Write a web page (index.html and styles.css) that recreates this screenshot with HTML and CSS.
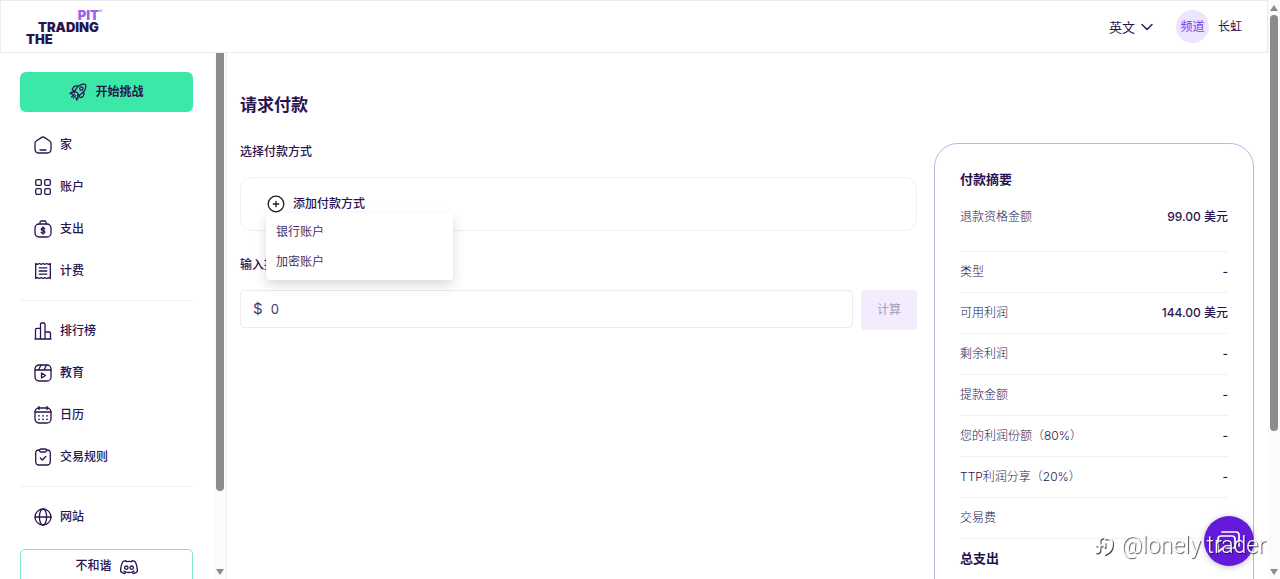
FILE: index.html
```html
<!DOCTYPE html>
<html lang="zh-CN">
<head>
<meta charset="utf-8">
<title>请求付款</title>
<link rel="stylesheet" href="styles.css">
</head>
<body>
<div class="app">
  <div class="view">
    <header class="header">
      <a class="logo" href="#" aria-label="The Trading Pit">
        <span class="logo-pit">PIT<i>®</i></span>
        <span class="logo-trading">TRADING</span>
        <span class="logo-the">THE</span>
      </a>
      <div class="header-tools">
        <button class="lang" type="button">英文
          <svg width="12" height="8" viewBox="0 0 12 8"><path d="M1 1.5l5 5 5-5"/></svg>
        </button>
        <a class="user" href="#"><span class="avatar">频道</span><span>长虹</span></a>
      </div>
    </header>
    <div class="body">
      <aside class="sidebar">
        <div class="sidebar-content">
          <button class="start" type="button">
            <svg class="icon" viewBox="0 0 18 18"><path d="M5.600 7.800L9.300 3.200Q12 .9 15.200 1.100 17 1.200 16.900 3 17 6 14.800 8.700L10.200 12.400M5.600 7.800q2.800 1.500 4.600 4.600M9.300 3.200Q6.500 2.200 4.600 4L3.300 6.200q-.2 1.200 2.300 1.600M14.800 8.700q1 2.800-.8 4.700l-2.200 1.300q-1.200.2-1.600-2.300M5.800 9.500Q3 8.200 1 10.400l2.300.6M8.500 12.200q1.300 2.800-.9 4.800L7 14.700M5.300 11.200l-2.600 2.600M6.500 12.600l-2.200 2.200"/><circle cx="12.400" cy="5.600" r="1.700"/></svg>
            开始挑战
          </button>
          <nav class="nav">
            <a href="#"><svg class="icon" viewBox="0 0 18 18"><path d="M1 7.300Q1 5.800 2.300 5L7.700 1.400Q9 .6 10.300 1.400L15.700 5Q17 5.800 17 7.300V13Q17 17 13 17H5Q1 17 1 13zM6 14h6"/></svg>家</a>
            <a href="#"><svg class="icon" viewBox="0 0 18 18"><rect x="1.700" y="1.700" width="5.600" height="5.600" rx="1.300"/><rect x="10.700" y="1.700" width="5.600" height="5.600" rx="1.300"/><rect x="1.700" y="10.700" width="5.600" height="5.600" rx="1.300"/><rect x="10.700" y="10.700" width="5.600" height="5.600" rx="1.300"/></svg>账户</a>
            <a href="#"><svg class="icon" viewBox="0 0 18 18"><rect x="1" y="4" width="16" height="13" rx="4"/><path d="M6 4V2.500Q6 1 7.500 1h3Q12 1 12 2.500V4M10.800 9Q10.500 8 9 8 7.200 8 7.200 9.300 7.200 10.300 9 10.500 10.900 10.700 10.900 11.900 10.900 13.200 9 13.200 7.300 13.200 7.100 12.100M9 7v7.200"/></svg>支出</a>
            <a href="#"><svg class="icon" viewBox="0 0 18 18"><path d="M1.700 1.500l1.800.8 1.800-.8 1.900.8L9 1.500l1.800.8 1.900-.8 1.800.8 1.800-.8v15l-1.800-.8-1.800.8-1.900-.8-1.800.8-1.800-.8-1.900.8-1.800-.8-1.800.8zM5.200 5.800h7.600M5.200 9h7.600M5.200 12.200h7.600"/></svg>计费</a>
          </nav>
          <nav class="nav">
            <a href="#"><svg class="icon" viewBox="0 0 18 18"><path d="M1 17h16M1.500 17V7.500q0-1.200 1.200-1.200h3.800M6.500 17V2.200Q6.500 1 7.700 1h2Q11 1 11 2.200V17M11 10h4.300q1.200 0 1.200 1.200V17"/></svg>排行榜</a>
            <a href="#"><svg class="icon" viewBox="0 0 18 18"><rect x="1" y="1" width="16" height="16" rx="4"/><path d="M1 6h16M7 1L4.500 6M12.500 1L10 6M7.500 9v5l4-2.500z"/></svg>教育</a>
            <a href="#"><svg class="icon" viewBox="0 0 18 18"><rect x="1" y="2" width="16" height="15" rx="4"/><path d="M1 6h16M5 .5v3M13 .5v3"/><path class="dots" d="M5 9.800h.01M9 9.800h.01M13 9.800h.01M5 13.300h.01M9 13.300h.01M13 13.300h.01"/></svg>日历</a>
            <a href="#"><svg class="icon" viewBox="0 0 18 18"><path d="M5.500 2H5Q1.700 2 1.700 5v8.500Q1.700 17 5 17h8q3.300 0 3.300-3.500V5Q16.300 2 13 2h-.5M6.300 10l2 2 3.500-3.500"/><rect x="5.500" y="1" width="7" height="3" rx="1.500"/></svg>交易规则</a>
          </nav>
          <nav class="nav">
            <a href="#"><svg class="icon" viewBox="0 0 18 18"><circle cx="9" cy="9" r="8"/><ellipse cx="9" cy="9" rx="3.600" ry="8"/><path d="M1 9h16"/></svg>网站</a>
          </nav>
          <a class="discord" href="#">不和谐
            <svg class="icon" viewBox="0 0 18 18"><path d="M6.300 3.600L5.800 2.600Q3.800 3 2.600 4 .5 8 .6 13.500 2.500 15.300 4.800 15.600L5.800 14q3.200 1 6.400 0l1 1.600q2.300-.3 4.200-2.100Q17.500 8 15.400 4 14.200 3 12.200 2.600l-.5 1q-2.700-.5-5.400 0zM4 13.200l1.800.8M14 13.200l-1.800.8"/><circle cx="6.300" cy="9.700" r="1.700"/><circle cx="11.700" cy="9.700" r="1.700"/></svg>
          </a>
        </div>
        <div class="side-scroll"><div class="side-thumb"></div><span class="arrow-down"></span></div>
      </aside>
      <main class="main">
        <h1>请求付款</h1>
        <div class="columns">
          <form class="form">
            <h2>选择付款方式</h2>
            <div class="method">
              <div class="dropdown">
                <button class="add" type="button" aria-expanded="true">
                  <svg class="icon" viewBox="0 0 18 18"><circle cx="9" cy="9" r="7.800"/><path d="M9 6.300v5.400M6.300 9h5.400"/></svg>
                  添加付款方式
                </button>
                <div class="menu">
                  <button type="button">银行账户</button>
                  <button type="button">加密账户</button>
                </div>
              </div>
            </div>
            <label class="amount-label" for="amount">输入提款金额</label>
            <div class="amount-row">
              <div class="amount"><span>$</span><input id="amount" type="text" value="0"></div>
              <button class="calc" type="button" disabled>计算</button>
            </div>
          </form>
          <section class="summary">
            <h3>付款摘要</h3>
            <dl>
              <div class="first"><dt>退款资格金额</dt><dd>99.00 美元</dd></div>
              <div><dt>类型</dt><dd>-</dd></div>
              <div><dt>可用利润</dt><dd>144.00 美元</dd></div>
              <div><dt>剩余利润</dt><dd>-</dd></div>
              <div><dt>提款金额</dt><dd>-</dd></div>
              <div><dt>您的利润份额（80%）</dt><dd>-</dd></div>
              <div><dt>TTP利润分享（20%）</dt><dd>-</dd></div>
              <div><dt>交易费</dt><dd>-</dd></div>
              <div class="total"><dt>总支出</dt><dd></dd></div>
            </dl>
          </section>
        </div>
      </main>
    </div>
  </div>
  <div class="page-scroll"><span class="arrow-up"></span><div class="page-track"><div class="page-thumb"></div></div><span class="arrow-down"></span></div>
</div>
<button class="chat" type="button" aria-label="聊天">
  <svg width="28" height="28" viewBox="0 0 28 28"><path d="M7 5h14q3 0 3 3v11"/><path d="M3 22V12q0-3 3-3h11q3 0 3 3v7q0 2-2 2H8l-5 4z"/></svg>
</button>
<div class="credit">
  <svg width="22" height="22" viewBox="0 0 22 22"><g class="shade"><path d="M10 3.500q-3.500 0-3.500 3.500v8q0 3.500-3.500 3.500M3 11.500h6M12 4.500q7-1.500 7 5.500 0 7-7 10M11.500 9v4"/></g><path d="M9 2.500Q5.500 2.500 5.500 6v8q0 3.500-3.500 3.500M2 10.500h6M11 3.500q7-1.500 7 5.500 0 7-7 10M10.500 8v4"/></svg>
  <span>@lonely trader</span>
</div>
</body>
</html>
```
FILE: styles.css
```css
* { box-sizing: border-box; }
body {
  margin: 0;
  color: #28144f;
  background: #fff;
  font: 500 12px/16px Inter, "Noto Sans CJK SC", sans-serif;
}
h1, h2, h3, dl, dd { margin: 0; }
a { color: inherit; text-decoration: none; }
button { border: 0; padding: 0; background: none; color: inherit; font: inherit; }
svg { fill: none; stroke: currentColor; stroke-linecap: round; stroke-linejoin: round; flex: none; }
.icon { width: 18px; height: 18px; stroke-width: 1.3; }
.dots { stroke-width: 1.7; }

.app { display: flex; height: 100vh; overflow: hidden; }
.view { flex: 1; min-width: 0; display: flex; flex-direction: column; }

.header {
  flex: none;
  height: 53px;
  display: flex;
  align-items: center;
  justify-content: space-between;
  padding: 0 25px;
  border: 1px solid #ececee;
}
.logo { display: flex; flex-direction: column; font: 900 13px/12px Inter, sans-serif; }
.logo-pit { position: relative; align-self: flex-end; color: #9b63ee; }
.logo-pit i { position: absolute; left: 100%; top: -3px; font: 400 5px/10px Inter, sans-serif; }
.logo-trading { padding-left: 12px; }
.header-tools { display: flex; align-items: center; gap: 23px; }
.lang { display: flex; align-items: center; gap: 6px; font-size: 13px; font-weight: 400; }
.lang svg { stroke-width: 1.4; }
.user { display: flex; align-items: center; gap: 9px; font-weight: 400; }
.avatar {
  width: 33px;
  height: 33px;
  display: grid;
  place-items: center;
  border-radius: 50%;
  background: #ece5fd;
  color: #7c3aed;
}

.body { flex: 1; min-height: 0; display: flex; }
.sidebar { flex: none; width: 227px; display: flex; border-right: 1px solid #ececee; }
.sidebar-content { flex: 1; padding: 19px 21px 0 20px; overflow: hidden; }
.start {
  width: 100%;
  height: 40px;
  display: flex;
  align-items: center;
  justify-content: center;
  gap: 8px;
  margin-bottom: 12px;
  border-radius: 6px;
  background: #3ce8a8;
  font-weight: 700;
}
.nav a { display: flex; align-items: center; gap: 8px; height: 42px; padding-left: 14px; }
.nav + .nav { margin-top: 8px; padding-top: 9px; border-top: 1px solid #f0f0f2; }
.discord {
  display: flex;
  align-items: flex-start;
  justify-content: center;
  gap: 8px;
  height: 40px;
  margin-top: 11px;
  padding-top: 8px;
  border: 1px solid #7ee8c4;
  border-radius: 5px;
}
.side-scroll, .page-scroll {
  flex: none;
  width: 12px;
  display: flex;
  flex-direction: column;
  align-items: center;
  background: #fbfbfb;
}
.side-scroll { justify-content: space-between; padding-bottom: 4px; }
.side-thumb { width: 8px; height: 84%; border-radius: 0 0 4px 4px; background: #8b8b8b; }
.page-scroll { padding: 5px 0 4px; }
.page-track { flex: 1; padding-top: 4px; }
.page-thumb { width: 8px; height: 75%; border-radius: 4px; background: #8b8b8b; }
.arrow-up, .arrow-down { border: 4px solid transparent; }
.arrow-up { border-top: 0; border-bottom: 6px solid #8b8b8b; }
.arrow-down { border-bottom: 0; border-top: 6px solid #8b8b8b; }

.main { flex: 1; min-width: 0; padding: 40px 14px 0 13px; overflow: hidden; }
h1 { font-size: 17px; line-height: 24px; font-weight: 700; margin-bottom: 26px; }
.columns { display: grid; grid-template-columns: minmax(0, 1fr) 320px; gap: 17px; align-items: start; }
h2, .amount-label { display: block; font-size: 12px; line-height: 18px; font-weight: 500; }
.method {
  height: 54px;
  margin: 16px 0 25px;
  padding-left: 26px;
  display: flex;
  align-items: center;
  border: 1px solid #f0f0f2;
  border-radius: 12px;
}
.dropdown { position: relative; }
.add { display: flex; align-items: center; gap: 8px; }
.add .icon { color: #1c1c28; }
.menu {
  position: absolute;
  top: 100%;
  left: -1px;
  width: 187px;
  padding: 4px 0 3px;
  display: flex;
  flex-direction: column;
  border-radius: 4px;
  background: #fff;
  box-shadow: 0 5px 12px rgba(0, 0, 0, .15);
}
.menu button { height: 30px; padding-left: 10px; text-align: left; font-weight: 400; color: #453368; }
.amount-row { display: flex; align-items: flex-start; gap: 8px; margin-top: 16px; }
.amount {
  flex: 1;
  height: 38px;
  display: flex;
  align-items: center;
  gap: 8px;
  padding: 0 12px;
  border: 1px solid #ececee;
  border-radius: 4px;
  color: #453368;
  font-size: 13px;
  font-weight: 400;
}
.amount span { font-size: 15px; }
.amount input { flex: 1; min-width: 0; border: 0; padding: 0; outline: 0; background: none; color: inherit; font: inherit; }
.calc { width: 56px; height: 40px; border-radius: 4px; background: #f3ebfe; color: #a79db8; font-weight: 400; }

.summary { padding: 25px; border: 1px solid #c4b1ee; border-radius: 24px; }
h3 { font-size: 13px; line-height: 20px; font-weight: 700; }
dl > div { display: flex; align-items: center; justify-content: space-between; height: 41px; border-bottom: 1px solid #f2f2f4; }
dl > .first { height: 63px; padding: 8px 0 14px; }
dl > .total { height: 38px; border: 0; font-size: 13px; font-weight: 700; }
dt { font-weight: 300; }
.total dt { font-weight: 700; }

.chat {
  position: fixed;
  right: 26px;
  bottom: 13px;
  width: 50px;
  height: 50px;
  display: grid;
  place-items: center;
  border-radius: 50%;
  background: #6519db;
  color: #fff;
  box-shadow: 0 1px 6px rgba(0, 0, 0, .25);
}
.chat svg { stroke-width: 1.7; }
.credit {
  position: fixed;
  right: 14px;
  bottom: 20px;
  display: flex;
  align-items: center;
  gap: 5px;
  color: #fff;
  font: 300 23px/26px Roboto, sans-serif;
  text-shadow: 1px 1px 1px rgba(0, 0, 0, .7);
  pointer-events: none;
}
.credit svg { stroke-width: 2; }
.credit .shade { stroke: #444; }
```
